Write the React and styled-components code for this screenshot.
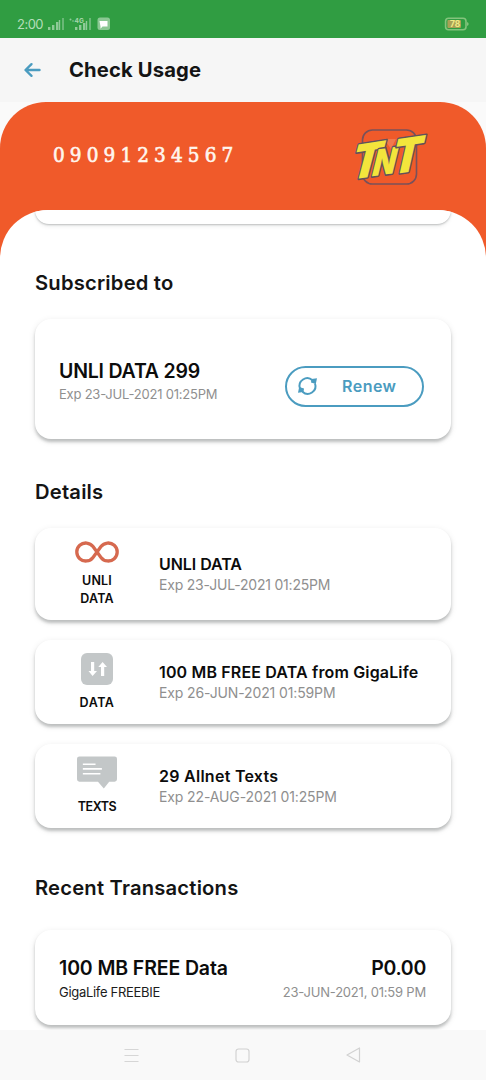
import React from 'react';
import styled, { createGlobalStyle } from 'styled-components';

const GlobalStyle = createGlobalStyle`
	* {
		box-sizing: border-box;
	}

	body {
		margin: 0;
		background: #fff;
		font-family: 'Inter', sans-serif;
	}

	p, h1, h2, h3 {
		margin: 0;
	}

	svg {
		display: block;
		flex: none;
		overflow: visible;
	}
`;

const Screen = styled.div`
	display: flex;
	flex-direction: column;
	width: 486px;
	height: 1080px;
	overflow: hidden;
	background: #fafafa;
`;

const StatusBar = styled.div`
	display: flex;
	align-items: center;
	justify-content: space-between;
	height: 38px;
	padding: 10px 17px 0 17px;
	background: #309d42;
`;

const StatusLeft = styled.div`
	display: flex;
	align-items: center;
`;

const Clock = styled.span`
	width: 31px;
	font-size: 13px;
	line-height: 16px;
	letter-spacing: -0.5px;
	color: #b4ddba;
`;

const Header = styled.header`
	display: flex;
	align-items: center;
	height: 64px;
	padding: 0 24px;
	background: #f6f6f6;
`;

const Title = styled.h1`
	margin-left: 28px;
	padding-bottom: 1px;
	font-size: 20.2px;
	line-height: 28px;
	font-weight: 700;
	letter-spacing: 0.15px;
	color: #141414;
`;

const Account = styled.div`
	display: flex;
	flex-direction: column;
	height: 928px;
	border-radius: 46px 46px 0 0;
	background: linear-gradient(#f05a2a 200px, #fff 200px);
	overflow: hidden;
`;

const AccountBar = styled.div`
	display: flex;
	align-items: center;
	justify-content: space-between;
	height: 108px;
	padding: 2px 57px 0 53px;
`;

const PhoneNumber = styled.span`
	margin-top: -5px;
	font-family: 'DejaVu Serif Condensed', 'DejaVu Serif', serif;
	font-size: 20.5px;
	letter-spacing: 5.12px;
	color: #fff6ee;
	-webkit-text-stroke: 0.6px #fff6ee;
`;

const Sheet = styled.main`
	flex: 1;
	padding: 0 35px;
	border-radius: 48px 48px 0 0;
	background: #fff;
	overflow: hidden;
`;

const Card = styled.section`
	display: flex;
	align-items: center;
	justify-content: ${props => (props.$split ? 'space-between' : 'flex-start')};
	height: ${props => props.$height}px;
	padding: ${props => (props.$split ? '0 25px 0 24px' : '0')};
	border-radius: 16px;
	background: #fff;
	box-shadow: 0 3px 3px rgba(60, 66, 66, 0.27), 0 2px 7px rgba(0, 0, 0, 0.1);
`;

const PreviousCard = styled(Card)`
	height: 14px;
	border-radius: 0 0 16px 16px;
	box-shadow: 0 1px 2px rgba(60, 66, 66, 0.3), 0 3px 4px rgba(0, 0, 0, 0.05);
`;

const SectionTitle = styled.h2`
	margin: ${props => props.$margin};
	font-size: 20.2px;
	line-height: 30px;
	font-weight: 600;
	letter-spacing: 0.2px;
	color: #141414;
`;

const CardTitle = styled.h3`
	font-size: 19.5px;
	line-height: 28px;
	font-weight: 600;
	letter-spacing: ${props => props.$spacing}px;
	color: #0c0c0c;
`;

const CardNote = styled.p`
	margin-top: ${props => props.$top || 0}px;
	font-size: 13px;
	line-height: 18px;
	letter-spacing: ${props => props.$spacing}px;
	color: ${props => (props.$dark ? '#1c1c1c' : '#8f8f8f')};
`;

const CardColumn = styled.div`
	padding-top: ${props => props.$top || 0}px;
	text-align: ${props => props.$align || 'left'};
	white-space: nowrap;
`;

const RenewButton = styled.button`
	display: flex;
	align-items: center;
	width: 139px;
	height: 41px;
	margin: 14px 2px 0 0;
	padding: 0 10px;
	border: 2px solid #4b9cc0;
	border-radius: 21px;
	background: #fff;
	font-family: inherit;
	font-size: 16px;
	font-weight: 600;
	letter-spacing: 0.47px;
	color: #4b9cc0;

	span {
		margin-left: 24px;
	}
`;

const DetailList = styled.div`
	display: flex;
	flex-direction: column;
	gap: 20px;
`;

const DetailKind = styled.div`
	display: flex;
	flex-direction: column;
	align-items: center;
	gap: 9px;
	width: 124px;
`;

const KindLabel = styled.span`
	max-width: 60px;
	font-size: 12.5px;
	line-height: 18px;
	font-weight: 600;
	letter-spacing: ${props => props.$spacing}px;
	text-align: center;
	color: #0c0c0c;
`;

const DetailTitle = styled.h3`
	font-size: 16px;
	line-height: 22px;
	font-weight: 600;
	letter-spacing: ${props => props.$spacing}px;
	color: #0c0c0c;
`;

const DetailNote = styled.p`
	font-size: 14px;
	line-height: 20px;
	letter-spacing: ${props => props.$spacing}px;
	color: #8f8f8f;
`;

const NavBar = styled.nav`
	display: flex;
	align-items: center;
	justify-content: space-between;
	height: 50px;
	padding: 0 125px 0 123.5px;
	background: #f9f9f9;
`;

const SignalIcons = () => (
	<svg width='63' height='14' viewBox='0 0 63 14'>
		<g fill='#8fcb98'>
			<rect x='0' y='10' width='2.4' height='3' />
			<rect x='4' y='8' width='2.4' height='5' />
			<rect x='8' y='5' width='2.4' height='8' />
			<rect x='10.8' y='3' width='1.4' height='10' />
			<rect x='14.4' y='1' width='1.2' height='12' />
			<circle cx='22.5' cy='2.5' r='1' />
			<circle cx='25' cy='4' r='0.8' />
			<rect x='27' y='10' width='2.4' height='3' />
			<rect x='31' y='8' width='2.4' height='5' />
			<rect x='35' y='6' width='2.4' height='7' />
			<rect x='37.8' y='4' width='1.4' height='9' />
			<rect x='41.4' y='1' width='1.2' height='12' />
		</g>
		<text x='26.5' y='5.5' fontSize='6.5' fontWeight='700' fill='#a5d5ab'>
			4G
		</text>
		<rect x='49.5' y='0.5' width='12.5' height='12.5' rx='2.5' fill='#8bc893' />
		<path d='M51.5 4h8v5.6h-5l-2 2.2V9.6z' fill='#fff' />
	</svg>
);

const BatteryIcon = () => (
	<svg width='25' height='14' viewBox='0 0 25 14'>
		<rect x='1.6' y='1.2' width='20.4' height='11.6' rx='3' fill='none' stroke='#83c47c' strokeWidth='1.6' />
		<path d='M23 5v4l1.5-1V6z' fill='#83c47c' />
		<rect x='3.4' y='3' width='13.6' height='8' rx='1' fill='#a9a155' />
		<text x='6' y='10.2' fontSize='8.5' fontWeight='700' fill='#f0ea86'>
			78
		</text>
	</svg>
);

const BackIcon = () => (
	<svg
		width='17'
		height='16'
		viewBox='0 0 17 16'
		fill='none'
		stroke='#4b9cc0'
		strokeWidth='2.4'
		strokeLinecap='round'
		strokeLinejoin='round'
	>
		<path d='M15.5 8H2M7.5 2.2L1.5 8l6 5.8' />
	</svg>
);

const LogoLetter = styled.text`
	font-family: 'Inter', sans-serif;
	font-weight: 900;
	fill: #f3e53c;
	stroke: #62525a;
	stroke-width: 3px;
	stroke-linejoin: round;
	paint-order: stroke;
`;

const BrandLogo = () => (
	<svg width='74' height='60' viewBox='0 0 74 60'>
		<rect x='7.5' y='3' width='54' height='54' rx='10' fill='none' stroke='#79515a' strokeWidth='1.6' />
		<path d='M29 12h12l-5 10z' fill='#f3784d' />
		<LogoLetter transform='matrix(0.95 -0.15 -0.28 1.06 8 51)' textAnchor='middle' fontSize='46'>
			T
		</LogoLetter>
		<LogoLetter transform='matrix(0.86 -0.12 -0.26 1.06 27 48)' textAnchor='middle' fontSize='35'>
			N
		</LogoLetter>
		<LogoLetter transform='matrix(0.95 -0.14 -0.24 1.06 49 45.5)' textAnchor='middle' fontSize='46'>
			T
		</LogoLetter>
	</svg>
);

const RenewIcon = () => (
	<svg width='21' height='20' viewBox='0 0 21 20'>
		<g fill='none' stroke='#4b9cc0' strokeWidth='2'>
			<path d='M3 12.5A7.7 7.7 0 0 1 15.5 4.3' />
			<path d='M18 7.5A7.7 7.7 0 0 1 5.5 15.7' />
		</g>
		<path d='M14 6.5l.5-3.5 5.5-.8-1.2 5.8z' fill='#4b9cc0' />
		<path d='M1 16.8l1.2-5.8 4.8 1.5-.5 3.5z' fill='#4b9cc0' />
	</svg>
);

const InfinityIcon = () => (
	<svg width='46' height='22' viewBox='0 0 46 22'>
		<path
			d='M23 11L19 5.6A9 9 0 1 0 19 16.4L27 5.6A9 9 0 1 1 27 16.4z'
			fill='none'
			stroke='#d6694f'
			strokeWidth='3.3'
		/>
	</svg>
);

const DataIcon = () => (
	<svg width='32' height='32' viewBox='0 0 32 32'>
		<rect width='32' height='32' rx='6' fill='#c3c7c8' />
		<path
			d='M10 9h3.2v9H16l-4.4 5-4.1-5H10zM20 23h3.2v-9H26l-4.400-5-4.3 5H20z'
			fill='#fff'
		/>
	</svg>
);

const TextsIcon = () => (
	<svg width='40' height='33' viewBox='0 0 41 33'>
		<path
			d='M2.5 0h36A2.5 2.5 0 0 1 41 2.5v21a2.5 2.5 0 0 1-2.5 2.5H33l-5.5 7-6-7h-19A2.5 2.5 0 0 1 0 23.5v-21A2.5 2.5 0 0 1 2.5 0z'
			fill='#c3c7c8'
		/>
		<path d='M6 8h13M6 12.8h19.5M6 17.8h18' stroke='#fff' strokeWidth='1.7' fill='none' />
	</svg>
);

const details = [
	{
		icon: <InfinityIcon />,
		kind: 'UNLI DATA',
		kindSpacing: 0.2,
		height: 92,
		title: 'UNLI DATA',
		titleSpacing: -0.05,
		note: 'Exp 23-JUL-2021 01:25PM',
		noteSpacing: -0.2
	},
	{
		icon: <DataIcon />,
		kind: 'DATA',
		kindSpacing: 0.5,
		height: 84,
		title: '100 MB FREE DATA from GigaLife',
		titleSpacing: 0.15,
		note: 'Exp 26-JUN-2021 01:59PM',
		noteSpacing: -0.13
	},
	{
		icon: <TextsIcon />,
		kind: 'TEXTS',
		kindSpacing: -0.4,
		height: 84,
		title: '29 Allnet Texts',
		titleSpacing: 0.27,
		note: 'Exp 22-AUG-2021 01:25PM',
		noteSpacing: -0.12
	}
];

const Detail = ({ item }) => (
	<Card $height={item.height}>
		<DetailKind>
			{item.icon}
			<KindLabel $spacing={item.kindSpacing}>{item.kind}</KindLabel>
		</DetailKind>
		<CardColumn>
			<DetailTitle $spacing={item.titleSpacing}>{item.title}</DetailTitle>
			<DetailNote $spacing={item.noteSpacing}>{item.note}</DetailNote>
		</CardColumn>
	</Card>
);

const App = () => (
	<Screen>
		<GlobalStyle />
		<StatusBar>
			<StatusLeft>
				<Clock>2:00</Clock>
				<SignalIcons />
			</StatusLeft>
			<BatteryIcon />
		</StatusBar>
		<Header>
			<BackIcon />
			<Title>Check Usage</Title>
		</Header>
		<Account>
			<AccountBar>
				<PhoneNumber>09091234567</PhoneNumber>
				<BrandLogo />
			</AccountBar>
			<Sheet>
				<PreviousCard />
				<SectionTitle $margin='44px 0 21px'>Subscribed to</SectionTitle>
				<Card $height={120} $split>
					<CardColumn $top={2}>
						<CardTitle $spacing={-0.2}>UNLI DATA 299</CardTitle>
						<CardNote $spacing={-0.22}>Exp 23-JUL-2021 01:25PM</CardNote>
					</CardColumn>
					<RenewButton>
						<RenewIcon />
						<span>Renew</span>
					</RenewButton>
				</Card>
				<SectionTitle $margin='38px 0 21px'>Details</SectionTitle>
				<DetailList>
					{details.map(item => (
						<Detail key={item.title} item={item} />
					))}
				</DetailList>
				<SectionTitle $margin='45px 0 27px'>Recent Transactions</SectionTitle>
				<Card $height={95} $split>
					<CardColumn>
						<CardTitle $spacing={-0.12}>100 MB FREE Data</CardTitle>
						<CardNote $top={1} $spacing={-0.3} $dark>
							GigaLife FREEBIE
						</CardNote>
					</CardColumn>
					<CardColumn $align='right'>
						<CardTitle $spacing={-0.3}>P0.00</CardTitle>
						<CardNote $top={1} $spacing={-0.2}>
							23-JUN-2021, 01:59 PM
						</CardNote>
					</CardColumn>
				</Card>
			</Sheet>
		</Account>
		<NavBar>
			<svg width='15' height='15' viewBox='0 0 15 15' stroke='#d6d6d6' strokeWidth='1.2'>
				<path d='M.5 1.5h14M.5 7.5h14M.5 13.5h14' />
			</svg>
			<svg width='15' height='15' viewBox='0 0 15 15' fill='none' stroke='#d2d2d2' strokeWidth='1.2'>
				<rect x='1' y='1' width='13' height='13' rx='2.5' />
			</svg>
			<svg
				width='15'
				height='16'
				viewBox='0 0 15 16'
				fill='none'
				stroke='#d2d2d2'
				strokeWidth='1.2'
				strokeLinejoin='round'
			>
				<path d='M13.5 1v14L1 8z' />
			</svg>
		</NavBar>
	</Screen>
);

export default App;
